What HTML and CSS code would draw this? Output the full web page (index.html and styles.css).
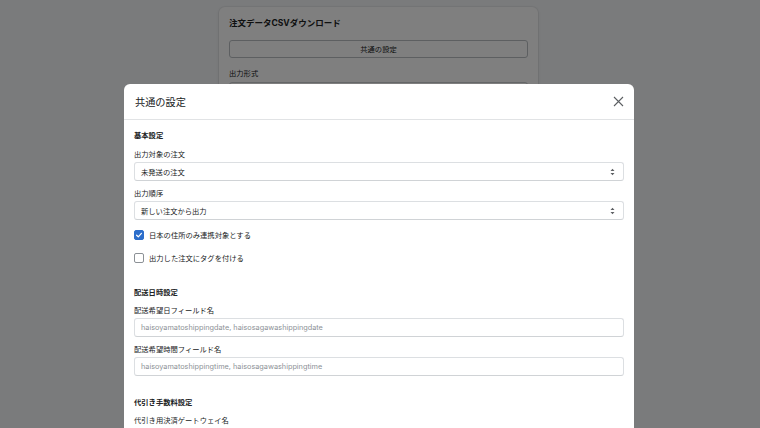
FILE: index.html
```html
<!DOCTYPE html>
<html lang="ja">
<head>
<meta charset="utf-8">
<title>共通の設定</title>
<link rel="stylesheet" href="styles.css">
</head>
<body>
<div class="page">
  <div class="card">
    <h1 class="card-title">注文データCSVダウンロード</h1>
    <div class="bg-button">共通の設定</div>
    <div class="bg-label">出力形式</div>
    <div class="bg-input"></div>
  </div>
</div>

<div class="overlay">
  <div class="modal">
    <div class="modal-header">
      <h2 class="modal-title">共通の設定</h2>
      <svg class="close" width="11" height="11" viewBox="0 0 11 11"><path d="M1 1L10 10M10 1L1 10" stroke="#5c5f62" stroke-width="1.1" fill="none"/></svg>
    </div>
    <div class="modal-body">
      <h3 class="section-title first">基本設定</h3>
      <div class="label">出力対象の注文</div>
      <div class="field select"><span>未発送の注文</span><svg width="5" height="8" viewBox="0 0 5 8"><path d="M0.5 3L2.5 0.8L4.5 3ZM0.5 5L2.5 7.2L4.5 5Z" fill="#5c5f62"/></svg></div>
      <div class="label">出力順序</div>
      <div class="field select"><span>新しい注文から出力</span><svg width="5" height="8" viewBox="0 0 5 8"><path d="M0.5 3L2.5 0.8L4.5 3ZM0.5 5L2.5 7.2L4.5 5Z" fill="#5c5f62"/></svg></div>
      <div class="check-row first-check">
        <span class="box checked"><svg width="8" height="8" viewBox="0 0 8 8"><path d="M1.6 4.2L3.3 5.8L6.4 2.3" stroke="#fff" stroke-width="1.2" fill="none" stroke-linecap="round" stroke-linejoin="round"/></svg></span>
        <span>日本の住所のみ連携対象とする</span>
      </div>
      <div class="check-row">
        <span class="box"></span>
        <span>出力した注文にタグを付ける</span>
      </div>

      <h3 class="section-title">配送日時設定</h3>
      <div class="label">配送希望日フィールド名</div>
      <div class="field input"><span class="placeholder">haisoyamatoshippingdate, haisosagawashippingdate</span></div>
      <div class="label">配送希望時間フィールド名</div>
      <div class="field input"><span class="placeholder">haisoyamatoshippingtime, haisosagawashippingtime</span></div>

      <h3 class="section-title">代引き手数料設定</h3>
      <div class="label">代引き用決済ゲートウェイ名</div>
      <div class="field input"></div>
    </div>
  </div>
</div>
</body>
</html>
```

FILE: styles.css
```css
* { box-sizing: border-box; }
html, body { margin: 0; padding: 0; }
body {
  background: #f4f6f8;
  font-family: "Inter", "Noto Sans CJK JP", sans-serif;
  color: #202223;
  width: 760px;
  height: 428px;
  overflow: hidden;
}
.page {
  display: flex;
  justify-content: center;
  padding-top: 7px;
}
.card {
  width: 319px;
  height: 200px;
  background: #fff;
  border-radius: 6px;
  padding: 11px 10px;
  margin-left: -3px;
  box-shadow: 0 0 0 1px rgba(63,63,68,0.05), 0 1px 3px rgba(63,63,68,0.15);
}
.card-title {
  margin: 0;
  font-size: 8.5px;
  line-height: 10px;
  font-weight: 700;
}
.bg-button {
  margin-top: 12px;
  height: 18px;
  border: 1px solid #babfc3;
  border-radius: 3px;
  font-size: 7.3px;
  display: flex;
  align-items: center;
  justify-content: center;
  color: #202223;
}
.bg-label {
  margin-top: 11px;
  font-size: 7.3px;
  line-height: 10px;
}
.bg-input {
  margin-top: 3px;
  height: 19px;
  border: 1px solid #c9cccf;
  border-radius: 3px;
}

.overlay {
  position: fixed;
  inset: 0;
  background: rgba(0,0,0,0.5);
  display: flex;
  justify-content: center;
  align-items: flex-start;
  padding-top: 84px;
}
.modal {
  width: 510px;
  background: #fff;
  border-radius: 6px;
  margin-left: -2px;
  height: 420px;
}
.modal-header {
  height: 36px;
  padding: 0 10px 0 11px;
  display: flex;
  align-items: center;
  justify-content: space-between;
  border-bottom: 1px solid #e1e3e5;
}
.modal-title {
  margin: 0;
  font-size: 10.2px;
  font-weight: 400;
  line-height: 12px;
}
.close { display: block; }
.modal-body {
  padding: 0 10px;
  display: flex;
  flex-direction: column;
}
.section-title {
  margin: 0;
  font-size: 7.3px;
  line-height: 10px;
  font-weight: 700;
}
.section-title.first { margin-top: 11px; }
.label {
  margin-top: 9px;
  font-size: 7.3px;
  line-height: 10px;
}
.section-title + .label { margin-top: 8px; }
.section-title.first + .label { margin-top: 9px; }
.field {
  margin-top: 2px;
  height: 19px;
  border: 1px solid #dcdfe2;
  border-bottom-color: #d0d3d6;
  border-radius: 3px;
  padding: 0 8px 0 6px;
  display: flex;
  align-items: center;
  justify-content: space-between;
  font-size: 7.3px;
}
.field svg { display: block; }
.placeholder { color: #8c9196; }
.select + .label { margin-top: 8px; }
.check-row {
  display: flex;
  align-items: center;
  gap: 5px;
  height: 14px;
  margin-top: 9px;
  font-size: 7.3px;
}
.check-row.first-check { margin-top: 8px; }
.box {
  width: 10px;
  height: 10px;
  border: 1px solid #8c9196;
  border-radius: 2px;
  display: flex;
  align-items: center;
  justify-content: center;
  background: #fff;
}
.box.checked {
  background: #2c6ecb;
  border-color: #2c6ecb;
}
.input + .label { margin-top: 8px; }
.check-row + .section-title { margin-top: 23px; }
.input + .section-title { margin-top: 22px; }
```
